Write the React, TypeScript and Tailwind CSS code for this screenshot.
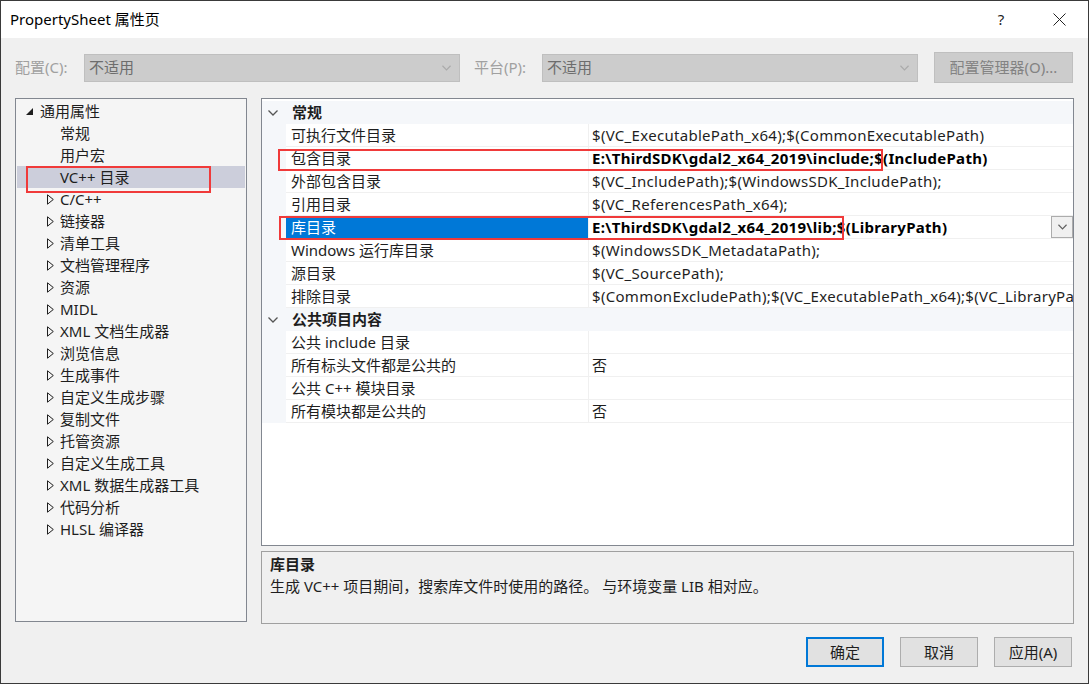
import { ReactNode } from "react";

const font = "font-['Noto_Sans','Noto_Sans_CJK_SC',sans-serif]";

type TreeItem = { label: string; level: 0 | 1; kind: "open" | "closed" | "leaf"; selected?: boolean };

const tree: TreeItem[] = [
  { label: "通用属性", level: 0, kind: "open" },
  { label: "常规", level: 1, kind: "leaf" },
  { label: "用户宏", level: 1, kind: "leaf" },
  { label: "VC++ 目录", level: 1, kind: "leaf", selected: true },
  { label: "C/C++", level: 1, kind: "closed" },
  { label: "链接器", level: 1, kind: "closed" },
  { label: "清单工具", level: 1, kind: "closed" },
  { label: "文档管理程序", level: 1, kind: "closed" },
  { label: "资源", level: 1, kind: "closed" },
  { label: "MIDL", level: 1, kind: "closed" },
  { label: "XML 文档生成器", level: 1, kind: "closed" },
  { label: "浏览信息", level: 1, kind: "closed" },
  { label: "生成事件", level: 1, kind: "closed" },
  { label: "自定义生成步骤", level: 1, kind: "closed" },
  { label: "复制文件", level: 1, kind: "closed" },
  { label: "托管资源", level: 1, kind: "closed" },
  { label: "自定义生成工具", level: 1, kind: "closed" },
  { label: "XML 数据生成器工具", level: 1, kind: "closed" },
  { label: "代码分析", level: 1, kind: "closed" },
  { label: "HLSL 编译器", level: 1, kind: "closed" },
];

type Row =
  | { type: "cat"; label: string }
  | { type: "prop"; name: string; value: string; bold?: boolean; selected?: boolean };

const rows: Row[] = [
  { type: "cat", label: "常规" },
  { type: "prop", name: "可执行文件目录", value: "$(VC_ExecutablePath_x64);$(CommonExecutablePath)" },
  { type: "prop", name: "包含目录", value: "E:\\ThirdSDK\\gdal2_x64_2019\\include;$(IncludePath)", bold: true },
  { type: "prop", name: "外部包含目录", value: "$(VC_IncludePath);$(WindowsSDK_IncludePath);" },
  { type: "prop", name: "引用目录", value: "$(VC_ReferencesPath_x64);" },
  { type: "prop", name: "库目录", value: "E:\\ThirdSDK\\gdal2_x64_2019\\lib;$(LibraryPath)", bold: true, selected: true },
  { type: "prop", name: "Windows 运行库目录", value: "$(WindowsSDK_MetadataPath);" },
  { type: "prop", name: "源目录", value: "$(VC_SourcePath);" },
  {
    type: "prop",
    name: "排除目录",
    value: "$(CommonExcludePath);$(VC_ExecutablePath_x64);$(VC_LibraryPath_x64);",
  },
  { type: "cat", label: "公共项目内容" },
  { type: "prop", name: "公共 include 目录", value: "" },
  { type: "prop", name: "所有标头文件都是公共的", value: "否" },
  { type: "prop", name: "公共 C++ 模块目录", value: "" },
  { type: "prop", name: "所有模块都是公共的", value: "否" },
];

function Chevron({ color = "#555", w = 10 }: { color?: string; w?: number }) {
  return (
    <svg width={w} height={6} viewBox="0 0 10 6" fill="none">
      <path d="M0.5 0.5 L5 5 L9.5 0.5" stroke={color} strokeWidth="1.3" />
    </svg>
  );
}

function Combo({ value }: { value: string }) {
  return (
    <div className="flex h-[28px] w-[376px] items-center justify-between border border-[#bfbfbf] bg-[#cccccc] pl-[4px] pr-[8px]">
      <span className="text-[15px] text-[#6d6d6d]">{value}</span>
      <Chevron color="#aaaaaa" w={9} />
    </div>
  );
}

function Button({ children, primary }: { children: ReactNode; primary?: boolean }) {
  return (
    <div
      className={
        primary
          ? "flex h-[30px] w-[78px] items-center justify-center border-2 border-[#0078d7] bg-[#e1e1e1] text-[15px] text-[#1e1e1e]"
          : "flex h-[30px] w-[78px] items-center justify-center border border-[#adadad] bg-[#e1e1e1] text-[15px] text-[#1e1e1e]"
      }
    >
      {children}
    </div>
  );
}

export default function App() {
  return (
    <div
      className={`relative flex h-[684px] w-[1089px] flex-col overflow-hidden border border-[#3a3a3a] bg-[#f0f0f0] ${font}`}
    >
      {/* title bar */}
      <div className="flex h-[37px] shrink-0 items-center justify-between bg-white pl-[9px]">
        <span className="text-[15px] text-black">PropertySheet 属性页</span>
        <div className="flex items-center">
          <span className="w-[58px] text-center text-[15px] text-[#222]">?</span>
          <div className="flex w-[58px] justify-center">
            <svg width="13" height="13" viewBox="0 0 13 13">
              <path d="M0.5 0.5 L12.5 12.5 M12.5 0.5 L0.5 12.5" stroke="#222" strokeWidth="1" />
            </svg>
          </div>
        </div>
      </div>

      <div className="flex flex-1 flex-col pl-[14px] pr-[13px]">
        {/* config row */}
        <div className="mt-[14px] flex h-[31px] items-center pr-[2px]">
          <span className="w-[69px] text-[15px] text-[#a0a0a0]">配置(C):</span>
          <Combo value="不适用" />
          <span className="ml-[14px] w-[68px] text-[15px] text-[#a0a0a0]">平台(P):</span>
          <Combo value="不适用" />
          <div className="ml-auto flex h-[31px] w-[139px] items-center justify-center border border-[#bfbfbf] bg-[#cccccc] text-[15px] text-[#838383]">
            配置管理器(O)...
          </div>
        </div>

        {/* panels */}
        <div className="mt-[15px] flex gap-[14px]">
          {/* tree */}
          <div className="h-[524px] w-[232px] border border-[#828790] bg-[#f5f5f5] pt-px">
            {tree.map((t) => (
              <div
                key={t.label}
                className={
                  t.selected
                    ? "mx-px flex h-[22px] items-center bg-[#cccedb] text-[15px] text-[#1e1e1e]"
                    : "mx-px flex h-[22px] items-center text-[15px] text-[#1e1e1e]"
                }
              >
                {t.level === 0 ? (
                  <>
                    <span className="ml-[9px] flex w-[14px]">
                      <svg width="7" height="7" viewBox="0 0 7 7">
                        <path d="M7 0 L7 7 L0 7 Z" fill="#1e1e1e" />
                      </svg>
                    </span>
                    <span>{t.label}</span>
                  </>
                ) : (
                  <>
                    <span className="ml-[30px] flex w-[13px]">
                      {t.kind === "closed" && (
                        <svg width="7" height="11" viewBox="0 0 7 11">
                          <path d="M0.5 0.8 L6.3 5.5 L0.5 10.2 Z" fill="none" stroke="#1e1e1e" strokeWidth="1" />
                        </svg>
                      )}
                    </span>
                    <span>{t.label}</span>
                  </>
                )}
              </div>
            ))}
          </div>

          {/* right column */}
          <div className="flex w-[813px] flex-col gap-[5px]">
            <div className="h-[448px] border border-[#828790] bg-white pt-[2px]">
              {rows.map((r, i) =>
                r.type === "cat" ? (
                  <div key={i} className="flex h-[23px] items-center bg-[#f5f7fa]">
                    <span className="ml-[6px] flex w-[24px]">
                      <Chevron />
                    </span>
                    <span className="text-[15px] font-bold text-[#1e1e1e]">{r.label}</span>
                  </div>
                ) : (
                  <div key={i} className="flex h-[23px]">
                    <div className="w-[24px] shrink-0 bg-[#f5f7fa]" />
                    <div
                      className={
                        r.selected
                          ? "flex w-[302px] shrink-0 items-center border-b border-[#f0f0f0] bg-[#0078d7] pl-[5px] text-[15px] text-white"
                          : "flex w-[302px] shrink-0 items-center border-b border-[#f0f0f0] pl-[5px] text-[15px] text-[#1e1e1e]"
                      }
                    >
                      {r.name}
                    </div>
                    <div className="w-px shrink-0 bg-[#f0f0f0]" />
                    <div className="flex min-w-0 flex-1 items-center border-b border-[#f0f0f0]">
                      <span
                        className={
                          r.bold
                            ? "flex-1 overflow-hidden whitespace-nowrap pl-[3px] text-[15px] font-bold tracking-[0.3px] text-black"
                            : "flex-1 overflow-hidden whitespace-nowrap pl-[3px] text-[15px] tracking-[0.3px] text-[#1e1e1e]"
                        }
                      >
                        {r.value}
                      </span>
                      {r.selected && (
                        <div className="flex h-[22px] w-[22px] shrink-0 items-center justify-center border border-[#acacac] bg-[#f0f0f0]">
                          <Chevron color="#606060" w={9} />
                        </div>
                      )}
                    </div>
                  </div>
                )
              )}
            </div>

            {/* description */}
            <div className="h-[73px] border border-[#a0a0a0] bg-[#f0f0f0] px-[8px] pt-[1px]">
              <div className="text-[15px] font-bold leading-[22px] text-[#1e1e1e]">库目录</div>
              <div className="text-[15px] leading-[22px] text-[#1e1e1e]">
                生成 VC++ 项目期间，搜索库文件时使用的路径。 与环境变量 LIB 相对应。
              </div>
            </div>
          </div>
        </div>

        {/* buttons */}
        <div className="mt-[13px] flex justify-end gap-[16px] pr-[3px]">
          <Button primary>确定</Button>
          <Button>取消</Button>
          <Button>应用(A)</Button>
        </div>
      </div>

      {/* red annotation boxes */}
      <div className="absolute left-[25px] top-[165px] h-[27px] w-[185px] border-2 border-[#f03a3a]" />
      <div className="absolute left-[277px] top-[148px] h-[22px] w-[605px] border-2 border-[#f03a3a]" />
      <div className="absolute left-[278px] top-[215px] h-[24px] w-[565px] border-2 border-[#f03a3a]" />
    </div>
  );
}
